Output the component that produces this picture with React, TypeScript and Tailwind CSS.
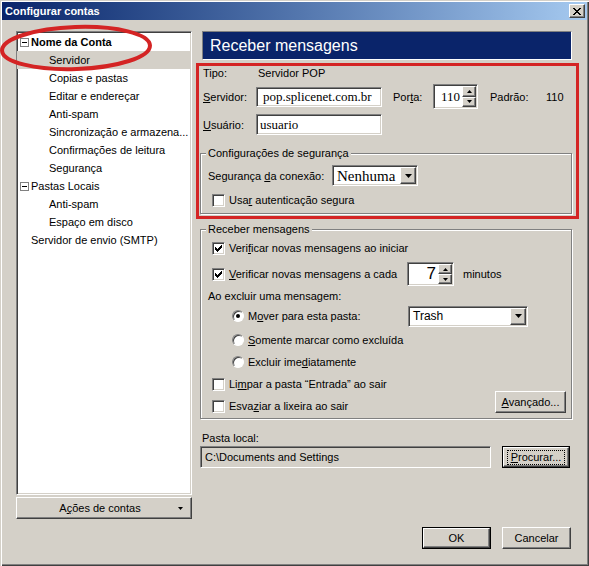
import React from 'react'

// classic 3D edges
const sunken =
  'border border-t-[#808080] border-l-[#808080] border-r-white border-b-white shadow-[inset_1px_1px_0_#404040,inset_-1px_-1px_0_#d4d0c8]'
const raised =
  'border border-t-white border-l-white border-r-[#404040] border-b-[#404040] shadow-[inset_-1px_-1px_0_#808080,inset_1px_1px_0_#d4d0c8]'
const etched = 'border border-[#808080] shadow-[inset_1px_1px_0_#fff,1px_1px_0_#fff]'

function U({ children }: { children: React.ReactNode }) {
  return <span className="underline underline-offset-[1px]">{children}</span>
}

function Check({ checked = false }: { checked?: boolean }) {
  return (
    <span className={`flex h-[13px] w-[13px] shrink-0 items-center justify-center bg-white ${sunken}`}>
      {checked && (
        <svg width="7" height="7" viewBox="0 0 7 7" shapeRendering="crispEdges">
          <polygon points="0,2 2,4 6,0 7,0 7,3 2,7 0,5" fill="#000" />
        </svg>
      )}
    </span>
  )
}

function Radio({ on = false }: { on?: boolean }) {
  return (
    <span className="flex h-[12px] w-[12px] shrink-0 items-center justify-center rounded-full border border-t-[#808080] border-l-[#808080] border-r-white border-b-white bg-white shadow-[inset_1px_1px_0_#404040]">
      {on && <span className="h-[4px] w-[4px] rounded-full bg-black" />}
    </span>
  )
}

function DownArrow() {
  return (
    <svg width="7" height="4" viewBox="0 0 7 4">
      <polygon points="0,0 7,0 3.5,4" fill="#000" />
    </svg>
  )
}

function ComboButton() {
  return (
    <span className={`flex h-full w-[16px] shrink-0 items-center justify-center bg-[#d4d0c8] ${raised}`}>
      <DownArrow />
    </span>
  )
}

function Spin({ value, w, h, textClass }: { value: string; w: string; h: string; textClass: string }) {
  return (
    <div className={`flex ${w} ${h} bg-white p-[1px] ${sunken}`}>
      <span className={`flex flex-1 items-center justify-end pr-[2px] text-black ${textClass}`}>{value}</span>
      <span className="flex w-[14px] flex-col">
        <span className={`flex flex-1 items-center justify-center bg-[#d4d0c8] ${raised}`}>
          <svg width="5" height="3" viewBox="0 0 5 3">
            <polygon points="0,3 5,3 2.5,0" fill="#000" />
          </svg>
        </span>
        <span className={`flex flex-1 items-center justify-center bg-[#d4d0c8] ${raised}`}>
          <svg width="5" height="3" viewBox="0 0 5 3">
            <polygon points="0,0 5,0 2.5,3" fill="#000" />
          </svg>
        </span>
      </span>
    </div>
  )
}

function Button({ children, w, def = false, focus = false }: { children: React.ReactNode; w: string; def?: boolean; focus?: boolean }) {
  const inner = (
    <div className={`flex h-full w-full items-center justify-center bg-[#d4d0c8] ${raised}`}>
      {focus ? <span className="border border-dotted border-black px-[3px] leading-[13px]">{children}</span> : children}
    </div>
  )
  return <div className={`${w} h-[22px] shrink-0 ${def ? 'border border-black' : ''}`}>{inner}</div>
}

function Minus() {
  return (
    <span className="flex h-[9px] w-[9px] shrink-0 items-center justify-center border border-[#808080] bg-white">
      <span className="h-[1px] w-[5px] bg-black" />
    </span>
  )
}

const treeItems: { label: string; level: number; box?: boolean; bold?: boolean; selected?: boolean }[] = [
  { label: 'Nome da Conta', level: 0, box: true, bold: true },
  { label: 'Servidor', level: 1, selected: true },
  { label: 'Copias e pastas', level: 1 },
  { label: 'Editar e endereçar', level: 1 },
  { label: 'Anti-spam', level: 1 },
  { label: 'Sincronização e armazena...', level: 1 },
  { label: 'Confirmações de leitura', level: 1 },
  { label: 'Segurança', level: 1 },
  { label: 'Pastas Locais', level: 0, box: true },
  { label: 'Anti-spam', level: 1 },
  { label: 'Espaço em disco', level: 1 },
  { label: 'Servidor de envio (SMTP)', level: 0 },
]

export default function App() {
  return (
    <div className="relative h-[566px] w-[589px] overflow-hidden bg-[#d4d0c8] p-[2px] font-['Liberation_Sans',Arial,sans-serif] text-[11px] leading-[14px] text-black shadow-[inset_1px_1px_0_#d4d0c8,inset_2px_2px_0_#fff,inset_-1px_-1px_0_#404040,inset_-2px_-2px_0_#808080]">
      {/* title bar */}
      <div className="flex h-[18px] items-center bg-linear-to-r from-[#0a246a] to-[#a6caf0] pl-[3px] pr-[2px]">
        <span className="flex-1 text-[11px] font-bold text-white">Configurar contas</span>
        <span className={`flex h-[14px] w-[16px] items-center justify-center bg-[#d4d0c8] ${raised}`}>
          <svg width="8" height="7" viewBox="0 0 8 7" shapeRendering="crispEdges">
            <path d="M0 0h2v1h-2zM6 0h2v1h-2zM1 1h2v1h-2zM5 1h2v1h-2zM2 2h4v1h-4zM3 3h2v1h-2zM2 4h4v1h-4zM1 5h2v1h-2zM5 5h2v1h-2zM0 6h2v1h-2zM6 6h2v1h-2z" fill="#000" />
          </svg>
        </span>
      </div>

      <div className="flex pl-[14px] pt-[11px]">
        {/* left column */}
        <div className="flex w-[176px] flex-col">
          <div className={`h-[464px] bg-white pt-[1px] ${sunken}`}>
            {treeItems.map((it, i) => (
              <div
                key={i}
                className={`flex h-[18px] items-center ${it.selected ? 'bg-[#d4d0c8]' : ''} ${
                  it.level === 1 ? 'pl-[32px]' : it.box ? 'pl-[3px]' : 'pl-[14px]'
                }`}
              >
                {it.box && <Minus />}
                <span className={`${it.box ? 'ml-[2px]' : ''} ${it.bold ? 'font-bold' : ''} whitespace-nowrap`}>{it.label}</span>
              </div>
            ))}
          </div>
          <div className={`mt-[2px] flex h-[22px] items-center bg-[#d4d0c8] ${raised}`}>
            <span className="flex-1 pl-[14px] text-center">
              A<U>ç</U>ões de contas
            </span>
            <span className="flex w-[22px] justify-center">
              <svg width="5" height="3" viewBox="0 0 5 3">
                <polygon points="0,0 5,0 2.5,3" fill="#000" />
              </svg>
            </span>
          </div>
        </div>

        {/* right column */}
        <div className="ml-[8px] flex w-[372px] flex-col">
          <div className="ml-[2px] flex h-[29px] items-center border border-t-[#808080] border-l-[#808080] border-r-white border-b-white bg-[#0a246a] pl-[7px] text-[16px] text-white">
            Receber mensagens
          </div>

          <div className="mt-[6px] flex h-[14px] items-center pl-[3px]">
            <span className="w-[53px]">Tipo:</span>
            <span className="pl-[2px]">Servidor POP</span>
          </div>

          <div className="mt-[4px] flex h-[25px] items-center pl-[3px]">
            <span className="w-[53px]">
              <U>S</U>ervidor:
            </span>
            <div className={`flex h-[20px] w-[126px] items-center bg-white pl-[6px] font-['Liberation_Serif','Times_New_Roman',serif] text-[13px] ${sunken}`}>
              pop.splicenet.com.br
            </div>
            <span className="ml-[11px] w-[40px]">
              Por<U>t</U>a:
            </span>
            <Spin value="110" w="w-[45px]" h="h-[25px]" textClass="font-['Liberation_Serif','Times_New_Roman',serif] text-[13px]" />
            <span className="ml-[12px] w-[56px]">Padrão:</span>
            <span>110</span>
          </div>

          <div className="mt-[5px] flex h-[21px] items-center pl-[3px]">
            <span className="w-[53px]">
              <U>U</U>suário:
            </span>
            <div className={`flex h-[21px] w-[126px] items-center bg-white pl-[3px] font-['Liberation_Serif','Times_New_Roman',serif] text-[13px] ${sunken}`}>
              usuario
            </div>
          </div>

          {/* security group */}
          <div className={`relative mt-[18px] h-[61px] pl-[7px] pt-[11px] ${etched}`}>
            <span className="absolute -top-[8px] left-[5px] bg-[#d4d0c8] px-[2px]">Configurações de segurança</span>
            <div className="flex h-[21px] items-center">
              <span className="w-[124px]">
                Segurança <U>d</U>a conexão:
              </span>
              <div className={`flex h-[21px] w-[86px] items-center bg-white p-[1px] ${sunken}`}>
                <span className="flex-1 pl-[3px] font-['Liberation_Serif','Times_New_Roman',serif] text-[15px]">Nenhuma</span>
                <ComboButton />
              </div>
            </div>
            <div className="mt-[6px] flex h-[16px] items-center pl-[4px]">
              <Check />
              <span className="ml-[4px]">
                Usa<U>r</U> autenticação segura
              </span>
            </div>
          </div>

          {/* receive group */}
          <div className={`relative mt-[15px] pb-[1px] pt-[7px] ${etched}`}>
            <span className="absolute -top-[8px] left-[5px] bg-[#d4d0c8] px-[2px]">Receber mensagens</span>
            <div className="flex h-[22px] items-center pl-[11px]">
              <Check checked />
              <span className="ml-[4px]">
                Veri<U>f</U>icar novas mensagens ao iniciar
              </span>
            </div>
            <div className="mt-[3px] flex h-[24px] items-center pl-[11px]">
              <Check checked />
              <span className="ml-[4px] w-[178px]">
                <U>V</U>erificar novas mensagens a cada
              </span>
              <Spin value="7" w="w-[47px]" h="h-[24px]" textClass="text-[17px]" />
              <span className="ml-[9px]">minutos</span>
            </div>
            <div className="mt-[2px] flex h-[16px] items-center pl-[7px]">Ao excluir uma mensagem:</div>
            <div className="mt-[1px] flex h-[22px] items-center pl-[31px]">
              <Radio on />
              <span className="ml-[4px] w-[160px]">
                M<U>o</U>ver para esta pasta:
              </span>
              <div className={`flex h-[21px] w-[120px] items-center bg-white p-[1px] ${sunken}`}>
                <span className="flex-1 pl-[3px] text-[12px]">Trash</span>
                <ComboButton />
              </div>
            </div>
            <div className="mt-[2px] flex h-[22px] items-center pl-[31px]">
              <Radio />
              <span className="ml-[4px]">
                <U>S</U>omente marcar como excluída
              </span>
            </div>
            <div className="flex h-[22px] items-center pl-[31px]">
              <Radio />
              <span className="ml-[4px]">
                Excluir ime<U>d</U>iatamente
              </span>
            </div>
            <div className="flex items-end">
              <div className="flex flex-1 flex-col">
                <div className="flex h-[22px] items-center pl-[11px]">
                  <Check />
                  <span className="ml-[4px]">
                    Li<U>m</U>par a pasta “Entrada” ao sair
                  </span>
                </div>
                <div className="flex h-[22px] items-center pl-[11px]">
                  <Check />
                  <span className="ml-[4px]">
                    Esva<U>z</U>iar a lixeira ao sair
                  </span>
                </div>
              </div>
              <div className="mb-[4px] mr-[5px]">
                <Button w="w-[71px]">
                  <span>
                    <U>A</U>vançado...
                  </span>
                </Button>
              </div>
            </div>
          </div>

          <div className="mt-[12px] flex h-[14px] items-center pl-[2px]">Pasta local:</div>
          <div className="mt-[1px] flex h-[22px] items-center">
            <div className={`flex h-[22px] w-[291px] items-center bg-[#d4d0c8] pl-[4px] ${sunken}`}>C:\Documents and Settings</div>
            <div className="ml-[11px]">
              <Button w="w-[68px]" def focus>
                <span>
                  <U>P</U>rocurar...
                </span>
              </Button>
            </div>
          </div>

          <div className="mr-[1px] mt-[59px] flex justify-end gap-[11px]">
            <Button w="w-[69px]" def>
              OK
            </Button>
            <Button w="w-[69px]">Cancelar</Button>
          </div>
        </div>
      </div>

      {/* red annotations drawn over the dialog */}
      <div className="pointer-events-none absolute left-[196px] top-[63px] h-[156px] w-[383px] border-[3px] border-[#d42424]" />
      <svg className="pointer-events-none absolute left-0 top-[20px]" width="160" height="56" viewBox="0 0 160 56">
        <ellipse cx="76" cy="28" rx="74" ry="21" transform="rotate(-2 76 28)" fill="none" stroke="#d42424" strokeWidth="4" />
      </svg>
    </div>
  )
}
